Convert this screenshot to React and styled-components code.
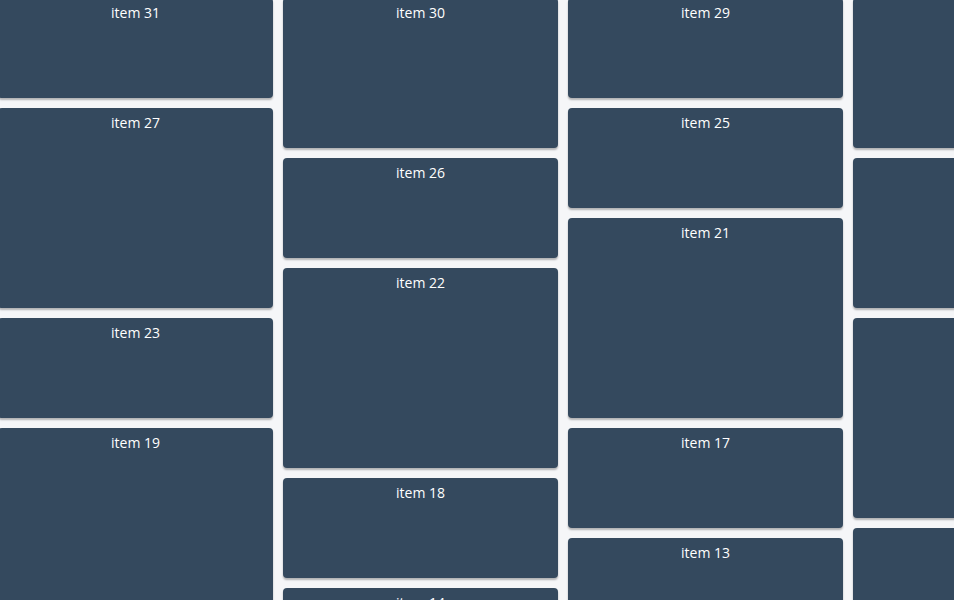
import React from "react";
import styled, { createGlobalStyle } from "styled-components";

const Global = createGlobalStyle`
  html, body { margin: 0; padding: 0; height: 100%; overflow: hidden; }
  body { background: #f5f6f8; font-family: "Open Sans", "Liberation Sans", sans-serif; }
`;

const Board = styled.div`
  display: flex;
  align-items: flex-start;
  gap: 10px;
  margin: -2px 0 0 -2px;
  width: 1200px;
`;

const Column = styled.div`
  display: flex;
  flex-direction: column;
  gap: 10px;
  width: 275px;
  flex: none;
`;

const Card = styled.div`
  height: ${(p) => p.$h}px;
  background: #34495e;
  border-radius: 4px;
  box-shadow: 0 2px 2px rgba(0, 0, 0, 0.28);
  color: #ffffff;
  font-size: 14px;
  line-height: 20px;
  text-align: center;
  padding-top: 5px;
  box-sizing: border-box;
`;

const columns = [
  [[31, 100], [27, 200], [23, 100], [19, 200]],
  [[30, 150], [26, 100], [22, 200], [18, 100], [14, 100]],
  [[29, 100], [25, 100], [21, 200], [17, 100], [13, 100]],
  [[28, 150], [24, 150], [20, 200], [16, 100]],
];

export default function App() {
  return (
    <>
      <Global />
      <Board>
        {columns.map((col, i) => (
          <Column key={i}>
            {col.map(([n, h]) => (
              <Card key={n} $h={h}>item {n}</Card>
            ))}
          </Column>
        ))}
      </Board>
    </>
  );
}
